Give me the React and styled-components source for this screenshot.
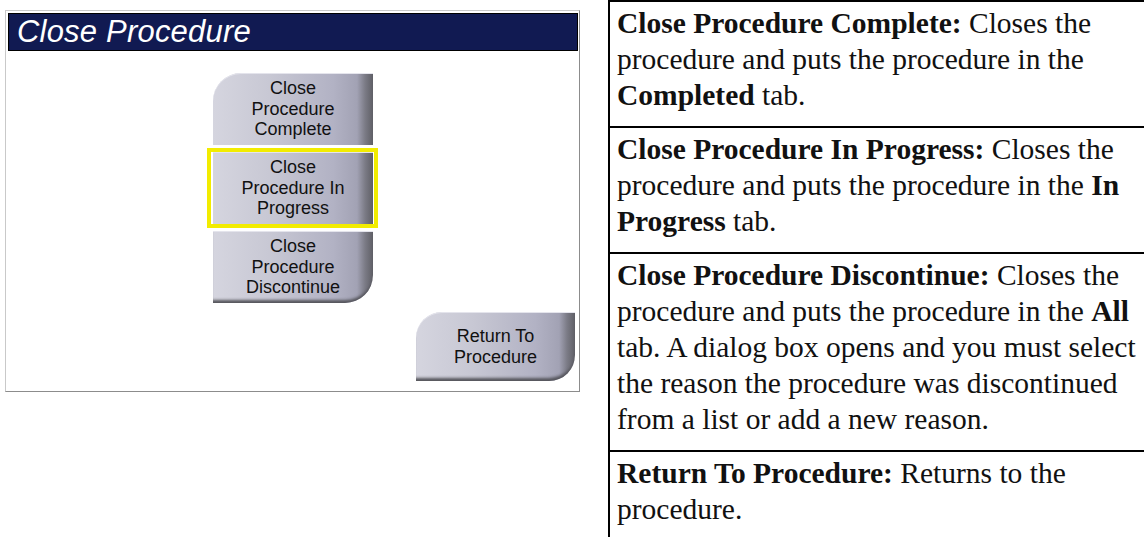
import React from "react";
import styled, { createGlobalStyle } from "styled-components";

const GlobalStyle = createGlobalStyle`
  html, body {
    margin: 0;
    padding: 0;
    background: #fff;
  }
  body {
    width: 1144px;
    height: 537px;
    overflow: hidden;
  }
`;

const Page = styled.div`
  display: flex;
  align-items: flex-start;
  width: 1144px;
  height: 537px;
`;

const Panel = styled.div`
  margin: 10px 0 0 5px;
  width: 575px;
  display: flex;
  flex-direction: column;
  border: 1px solid #c9c9c9;
  border-right-color: #8c8c8c;
  border-bottom-color: #8c8c8c;
  box-sizing: border-box;
  background: #fff;
`;

const TitleBar = styled.div`
  margin: 2px 1px 0 2px;
  height: 38px;
  background: #111a52;
  border: 1px solid #000;
  box-sizing: border-box;
  display: flex;
  align-items: center;
  padding-left: 8px;
  color: #fff;
  font-family: "Liberation Sans", Arial, sans-serif;
  font-style: italic;
  font-size: 31px;
  letter-spacing: 0.2px;
`;

const Body = styled.div`
  display: flex;
  flex-direction: column;
  padding: 18px 4px 10px 0;
`;

const Stack = styled.div`
  display: flex;
  flex-direction: column;
  align-self: flex-start;
  margin-left: 201px;
`;

const Slot = styled.div`
  border: 4px solid ${(p) => (p.$selected ? "#f2ec00" : "transparent")};
  padding: 0 1px 0 2px;
  margin-bottom: ${(p) => (p.$last ? "0" : "-1px")};
`;

const radius = (c) => {
  if (c === "top") return "28px 0 0 0";
  if (c === "bottom") return "0 0 28px 0";
  if (c === "both") return "26px 0 26px 0";
  return "0";
};

const Button = styled.button`
  width: ${(p) => p.$w || 160}px;
  height: ${(p) => p.$h || 72}px;
  border: none;
  padding: 0;
  border-radius: ${(p) => radius(p.$corner)};
  background: linear-gradient(
    90deg,
    #d5d5df 0%,
    #c8c8d4 35%,
    #b2b2c4 75%,
    #a2a2b4 90%,
    #7b7b86 95%,
    #5f5f66 100%
  );
  box-shadow: inset 0 1px 0 #e4e4ec
    ${(p) => (p.$shadow ? ", inset 0 -5px 3px -2px #55555c" : "")};
  font-family: "Liberation Sans", Arial, sans-serif;
  font-size: 18px;
  line-height: 20.5px;
  color: #111;
  text-align: center;
  display: flex;
  align-items: center;
  justify-content: center;
  box-sizing: border-box;
`;

const ReturnRow = styled.div`
  display: flex;
  justify-content: flex-end;
  margin-top: 5px;
`;

const Table = styled.div`
  margin-left: 28px;
  flex: 1;
  border-left: 2px solid #000;
  border-top: 2px solid #000;
  display: flex;
  flex-direction: column;
  height: 537px;
  box-sizing: border-box;
`;

const Row = styled.div`
  padding: 3px 8px 13px 7px;
  border-bottom: ${(p) => (p.$last ? "none" : "2px solid #000")};
  font-family: "Liberation Serif", "Times New Roman", serif;
  font-size: 29.5px;
  line-height: 36px;
  color: #111;
  white-space: nowrap;
  b {
    font-weight: bold;
  }
`;

const rows = [
  {
    title: "Close Procedure Complete:",
    body: (
      <>
        {" "}Closes the
        <br />
        procedure and puts the procedure in the
        <br />
        <b>Completed</b> tab.
      </>
    ),
  },
  {
    title: "Close Procedure In Progress:",
    body: (
      <>
        {" "}Closes the
        <br />
        procedure and puts the procedure in the <b>In</b>
        <br />
        <b>Progress</b> tab.
      </>
    ),
  },
  {
    title: "Close Procedure Discontinue:",
    body: (
      <>
        {" "}Closes the
        <br />
        procedure and puts the procedure in the <b>All</b>
        <br />
        tab. A dialog box opens and you must select
        <br />
        the reason the procedure was discontinued
        <br />
        from a list or add a new reason.
      </>
    ),
  },
  {
    title: "Return To Procedure:",
    body: (
      <>
        {" "}Returns to the
        <br />
        procedure.
      </>
    ),
  },
];

const App = () => {
  return (
    <Page>
      <GlobalStyle />
      <Panel>
        <TitleBar>Close Procedure</TitleBar>
        <Body>
          <Stack>
            <Slot>
              <Button $corner="top">
                Close
                <br />
                Procedure
                <br />
                Complete
              </Button>
            </Slot>
            <Slot $selected>
              <Button>
                Close
                <br />
                Procedure In
                <br />
                Progress
              </Button>
            </Slot>
            <Slot $last>
              <Button $corner="bottom" $shadow>
                Close
                <br />
                Procedure
                <br />
                Discontinue
              </Button>
            </Slot>
          </Stack>
          <ReturnRow>
            <Button $corner="both" $shadow $w={159} $h={69}>
              Return To
              <br />
              Procedure
            </Button>
          </ReturnRow>
        </Body>
      </Panel>
      <Table>
        {rows.map((r, i) => (
          <Row key={i} $last={i === rows.length - 1}>
            <b>{r.title}</b>
            {r.body}
          </Row>
        ))}
      </Table>
    </Page>
  );
};

export default App;
